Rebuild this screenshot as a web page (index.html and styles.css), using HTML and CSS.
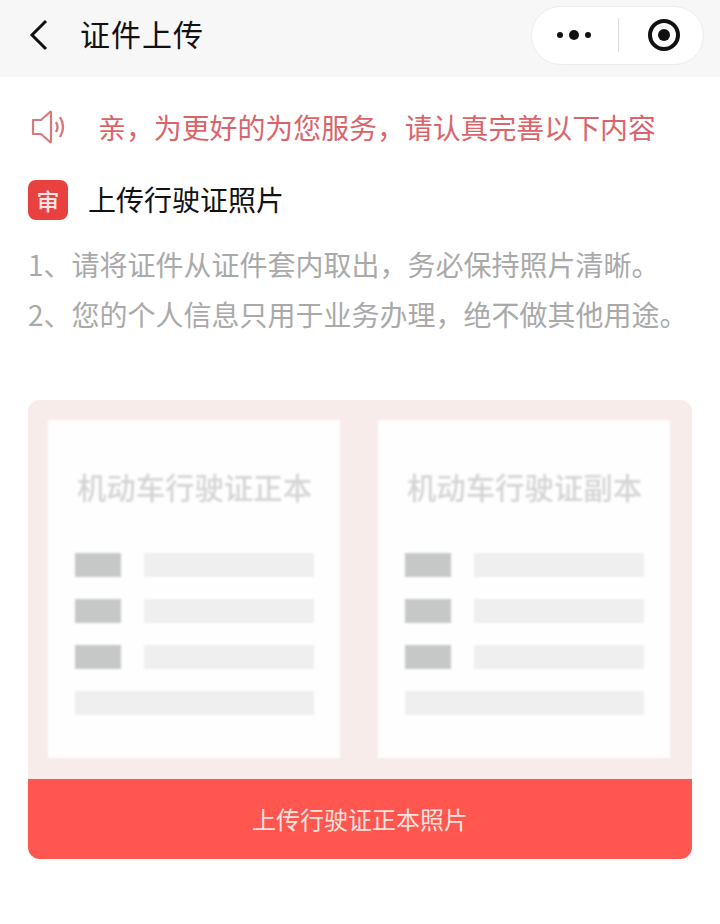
FILE: index.html
```html
<!DOCTYPE html>
<html lang="zh-CN">
<head>
<meta charset="utf-8">
<title>证件上传</title>
<link rel="stylesheet" href="styles.css">
</head>
<body>
<header class="nav">
  <svg class="back" width="20" height="34" viewBox="0 0 20 34"><path d="M17 3 L3 17 L17 31" fill="none" stroke="#111" stroke-width="3"/></svg>
  <h1 class="nav-title">证件上传</h1>
  <div class="capsule">
    <svg class="dots" width="38" height="14" viewBox="0 0 38 14"><circle cx="5" cy="7" r="3" fill="#111"/><circle cx="19" cy="7" r="5" fill="#111"/><circle cx="33" cy="7" r="3" fill="#111"/></svg>
    <span class="capsule-line"></span>
    <svg class="target" width="34" height="34" viewBox="0 0 34 34"><circle cx="17" cy="17" r="14" fill="none" stroke="#111" stroke-width="4"/><circle cx="17" cy="17" r="6" fill="#111"/></svg>
  </div>
</header>
<main class="page">
  <div class="notice">
    <svg class="speaker" width="36" height="36" viewBox="0 0 36 36" fill="none" stroke="#d9787a" stroke-width="2.2"><path d="M3 11 H11 L20 3 Q21 2 21 4 V32 Q21 34 20 33 L11 25 H3 Z" stroke-linejoin="round"/><path d="M26 13 Q29 18 26 23" stroke-width="2.4"/><path d="M30 8 Q36 18 30 28" stroke-width="2.4"/></svg>
    <p class="notice-text">亲，为更好的为您服务，请认真完善以下内容</p>
  </div>
  <div class="heading">
    <span class="badge">审</span>
    <h2 class="heading-text">上传行驶证照片</h2>
  </div>
  <ol class="tips">
    <li>1、请将证件从证件套内取出，务必保持照片清晰。</li>
    <li>2、您的个人信息只用于业务办理，绝不做其他用途。</li>
  </ol>
  <section class="upload">
    <div class="samples">
      <article class="sample">
        <h3 class="sample-title">机动车行驶证正本</h3>
        <div class="row"><span class="key"></span><span class="val"></span></div>
        <div class="row"><span class="key"></span><span class="val"></span></div>
        <div class="row"><span class="key"></span><span class="val"></span></div>
        <div class="row"><span class="val"></span></div>
      </article>
      <article class="sample">
        <h3 class="sample-title">机动车行驶证副本</h3>
        <div class="row"><span class="key"></span><span class="val"></span></div>
        <div class="row"><span class="key"></span><span class="val"></span></div>
        <div class="row"><span class="key"></span><span class="val"></span></div>
        <div class="row"><span class="val"></span></div>
      </article>
    </div>
    <button class="submit" type="button">上传行驶证正本照片</button>
  </section>
</main>
</body>
</html>
```
FILE: styles.css
```css
* { box-sizing: border-box; margin: 0; padding: 0; }
html, body { width: 720px; height: 924px; overflow: hidden; background: #fff; }
body { font-family: "Noto Sans CJK SC", "Liberation Sans", sans-serif; }

.nav {
  height: 77px;
  background: #f7f7f7;
  display: flex;
  align-items: center;
  padding: 0 16px 7px 29px;
}
.back { flex: none; }
.nav-title {
  margin: 0 0 4px 31px;
  font-size: 30px;
  font-weight: 400;
  line-height: 40px;
  letter-spacing: 1px;
  color: #111;
}
.capsule {
  margin-left: auto;
  width: 173px;
  height: 59px;
  border: 1px solid #ececec;
  border-radius: 30px;
  background: #fff;
  display: flex;
  align-items: center;
  padding-left: 23px;
}
.capsule-line { width: 1px; height: 34px; background: #ddd; margin-left: 25px; }
.target { margin-left: 28px; }

.page { padding: 0 28px; }
.notice {
  display: flex;
  align-items: center;
  height: 40px;
  margin-top: 30px;
  padding-left: 2px;
}
.notice-text {
  margin-left: 32px;
  font-size: 27.9px;
  line-height: 40px;
  color: #d9646a;
  white-space: nowrap;
}
.heading { display: flex; align-items: center; margin-top: 33px; height: 40px; }
.badge {
  width: 40px;
  height: 40px;
  border-radius: 8px;
  background: #e8413f;
  color: #fde6e4;
  font-size: 23px;
  font-weight: 500;
  line-height: 40px;
  text-align: center;
}
.heading-text {
  margin: 0 0 2px 20px;
  font-size: 28px;
  font-weight: 400;
  line-height: 40px;
  color: #111;
}
.tips {
  list-style: none;
  margin-top: 19px;
  font-size: 28px;
  line-height: 50px;
  color: #a9a9a9;
  white-space: nowrap;
}
.upload {
  margin-top: 61px;
  width: 664px;
  height: 459px;
  border-radius: 12px;
  overflow: hidden;
  background: #f7ecea;
  display: flex;
  flex-direction: column;
}
.samples {
  flex: 1;
  display: flex;
  gap: 38px;
  padding: 20px 22px 21px 20px;
}
.sample {
  flex: 1;
  background: #fefefe;
  padding: 47px 26px 0 27px;
  filter: blur(1px);
}
.sample-title {
  font-size: 29.4px;
  font-weight: 500;
  line-height: 38px;
  color: #d4d4d4;
  text-align: center;
  white-space: nowrap;
  margin-bottom: 48px;
}
.row { display: flex; gap: 23px; height: 24px; margin-bottom: 22px; }
.key { width: 46px; background: #c6c8c8; }
.val { flex: 1; background: #efefef; }
.submit {
  height: 80px;
  flex: none;
  border: 0;
  padding-bottom: 2px;
  background: #ff5650;
  color: #fde3de;
  font-family: inherit;
  font-size: 24px;
  text-align: center;
}
```
